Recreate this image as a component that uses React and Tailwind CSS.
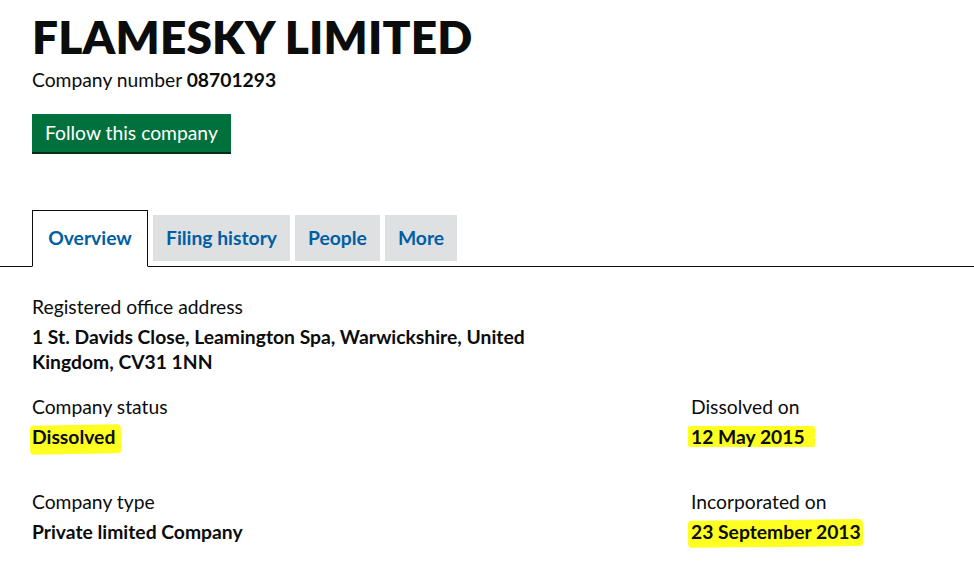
import React from 'react';

const tabs = ['Filing history', 'People', 'More'];

function Field({ label, value, mark }) {
  return (
    <div>
      <div className="text-[19.3px] leading-[25px] text-[#0b0c0c]">{label}</div>
      <div className="mt-[5px] text-[19.3px] leading-[25px] font-bold text-[#0b0c0c]">
        {mark ? (
          <span className="relative inline-block">
            <span className={mark} />
            <span className="relative">{value}</span>
          </span>
        ) : (
          value
        )}
      </div>
    </div>
  );
}

export default function App() {
  return (
    <div className="w-[974px] h-[573px] overflow-hidden bg-white" style={{ fontFamily: 'Lato, "Open Sans", sans-serif' }}>
      <div className="pl-[32px] pt-[14px]">
        <h1 className="text-[46px] leading-[46px] font-extrabold text-[#0b0c0c] tracking-[0.2px]">FLAMESKY LIMITED</h1>
        <p className="mt-[7px] text-[19.3px] leading-[25px] text-[#0b0c0c]">
          Company number <strong className="font-bold">08701293</strong>
        </p>
        <button className="mt-[22px] h-[40px] px-[13px] bg-[#00703c] text-white text-[19.3px] border-b-2 border-[#002d18]">
          Follow this company
        </button>
      </div>

      <div className="mt-[56px] flex items-end border-b border-[#0b0c0c] pl-[32px]">
        <div className="h-[57px] w-[116px] -mb-px border border-[#0b0c0c] border-b-white bg-white flex items-center justify-center text-[19.3px] font-bold text-[#005ea5]">
          Overview
        </div>
        {tabs.map((t) => (
          <div key={t} className="ml-[5px] mb-[5px] h-[46px] px-[13px] bg-[#dee0e2] flex items-center text-[19.3px] font-bold text-[#005ea5]">
            {t}
          </div>
        ))}
      </div>

      <div className="pl-[32px] pt-[27px]">
        <Field
          label="Registered office address"
          value={<span className="block w-[510px]">1 St. Davids Close, Leamington Spa, Warwickshire, United Kingdom, CV31 1NN</span>}
        />
        <div className="mt-[20px] grid grid-cols-[659px_1fr]">
          <Field
            label="Company status"
            value="Dissolved"
            mark="absolute -left-[2px] -right-[6px] top-[1px] -bottom-[5px] bg-[#ffff22] rounded-[4px] -rotate-1"
          />
          <Field
            label="Dissolved on"
            value="12 May 2015"
            mark="absolute -left-[3px] -right-[10px] top-[2px] bottom-[2px] bg-[#ffff22] rounded-[2px]"
          />
        </div>
        <div className="mt-[40px] grid grid-cols-[659px_1fr]">
          <Field label="Company type" value="Private limited Company" />
          <Field
            label="Incorporated on"
            value="23 September 2013"
            mark="absolute -left-[3px] -right-[2px] top-[1px] -bottom-[3px] bg-[#ffff22] rounded-[4px] -rotate-[0.6deg]"
          />
        </div>
      </div>
    </div>
  );
}
